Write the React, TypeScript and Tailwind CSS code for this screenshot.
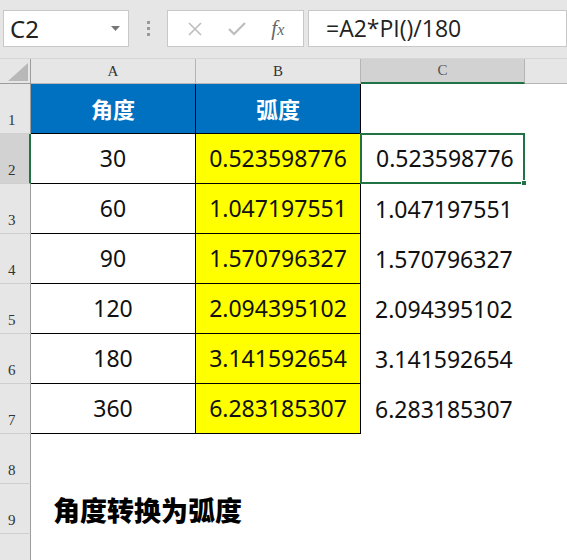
const rows = [
  { a: '30', b: '0.523598776' },
  { a: '60', b: '1.047197551' },
  { a: '90', b: '1.570796327' },
  { a: '120', b: '2.094395102' },
  { a: '180', b: '3.141592654' },
  { a: '360', b: '6.283185307' },
];

const num = "font-['Noto_Sans','Open_Sans',sans-serif] text-[23px] text-[#111]";
const cjk = "font-['Noto_Sans_CJK_SC','Noto_Sans',sans-serif]";
const hdr = "font-['Liberation_Serif',serif] text-[15px] text-[#333]";

function RowHead({ n, active = false }: { n?: number; active?: boolean }) {
  return (
    <div
      className={`h-[50px] flex items-end pl-[8px] pb-[2px] border-b border-[#cfcfcf] ${hdr} ${
        active ? 'bg-[#d2d2d2] border-r-2 border-r-[#217346]' : 'bg-[#e6e6e6] border-r border-r-[#9c9c9c]'
      }`}
    >
      {n}
    </div>
  );
}

export default function App() {
  return (
    <div className="w-[567px] h-[560px] overflow-hidden bg-white">
      {/* formula bar */}
      <div className="h-[59px] bg-[#e6e6e6] flex items-start pt-[10px] pl-[3px] border-b border-[#d6d6d6]">
        <div className="w-[126px] h-[37px] bg-white border border-[#c8c8c8] flex items-center justify-between pl-[6px] pr-[8px]">
          <span className="font-['Noto_Sans',sans-serif] text-[24px] text-[#222]">C2</span>
          <svg width="9" height="5" viewBox="0 0 9 5">
            <path d="M0 0h9L4.5 5z" fill="#777" />
          </svg>
        </div>
        <div className="w-[38px] h-[37px] flex flex-col items-center justify-center gap-[3px]">
          <span className="w-[3px] h-[3px] bg-[#999]" />
          <span className="w-[3px] h-[3px] bg-[#999]" />
          <span className="w-[3px] h-[3px] bg-[#999]" />
        </div>
        <div className="w-[137px] h-[37px] bg-white border border-[#c8c8c8] flex items-center justify-around px-[6px]">
          <svg width="16" height="16" viewBox="0 0 16 16">
            <path d="M2 2l12 12M14 2L2 14" stroke="#bdbdbd" strokeWidth="1.6" />
          </svg>
          <svg width="18" height="14" viewBox="0 0 18 14">
            <path d="M1 7l5 5L17 1" stroke="#bdbdbd" strokeWidth="2.2" fill="none" />
          </svg>
          <span className="font-['Liberation_Serif',serif] italic text-[21px] text-[#666] leading-none">
            f<span className="text-[16px]">x</span>
          </span>
        </div>
        <div className="ml-[4px] flex-1 h-[37px] bg-white border border-[#c8c8c8] flex items-center pl-[17px]">
          <span className="font-['Open_Sans','Noto_Sans',sans-serif] text-[23px] text-[#222]">=A2*PI()/180</span>
        </div>
      </div>

      {/* grid */}
      <div className="grid grid-cols-[31px_165px_165px_164px_1fr]">
        {/* column header row */}
        <div className="h-[25px] bg-[#e6e6e6] border-r border-b border-[#9c9c9c] flex items-end justify-end pr-[2px] pb-[2px]">
          <svg width="20" height="18" viewBox="0 0 20 18">
            <path d="M20 0v18H0z" fill="#b8b8b8" />
          </svg>
        </div>
        <div className={`h-[25px] bg-[#e6e6e6] border-r border-b border-[#b5b5b5] flex items-center justify-center ${hdr}`}>A</div>
        <div className={`h-[25px] bg-[#e6e6e6] border-r border-b border-[#b5b5b5] flex items-center justify-center ${hdr}`}>B</div>
        <div className={`h-[25px] bg-[#d2d2d2] border-r border-[#b5b5b5] border-b-2 border-b-[#217346] flex items-center justify-center ${hdr} text-[#555]`}>C</div>
        <div className="h-[25px] bg-[#e6e6e6] border-b border-[#b5b5b5]" />

        {/* row 1 */}
        <RowHead n={1} />
        <div className={`h-[50px] bg-[#0070c0] border-r border-b border-black flex items-center justify-center text-white font-bold text-[22px] ${cjk}`}>角度</div>
        <div className={`h-[50px] bg-[#0070c0] border-r border-b border-black flex items-center justify-center text-white font-bold text-[22px] ${cjk}`}>弧度</div>
        <div className="h-[50px]" />
        <div className="h-[50px]" />

        {rows.map((r, i) => (
          <div key={r.a} className="contents">
            <RowHead n={i + 2} active={i === 0} />
            <div className={`h-[50px] bg-white border-r border-b border-black flex items-center justify-center ${num}`}>{r.a}</div>
            <div className={`h-[50px] bg-[#ffff00] border-r border-b border-black flex items-center justify-center ${num}`}>{r.b}</div>
            <div
              className={`relative h-[50px] flex items-center pl-[14px] ${num} ${
                i === 0 ? 'border-2 border-[#217346] ml-[-1px] mt-[-1px] h-[51px]' : ''
              }`}
            >
              {r.b}
              {i === 0 && <span className="absolute right-[-4px] bottom-[-4px] w-[6px] h-[6px] bg-[#217346] border border-white" />}
            </div>
            <div className="h-[50px]" />
          </div>
        ))}

        {/* row 8 */}
        <RowHead n={8} />
        <div className="h-[50px] col-span-4" />

        {/* row 9 */}
        <RowHead n={9} />
        <div className={`h-[50px] col-span-4 flex items-center pl-[22px] pt-[2px] text-[27px] font-black text-black ${cjk}`}>
          角度转换为弧度
        </div>

        {/* row 10 (label falls below the window) */}
        <RowHead />
        <div className="h-[50px] col-span-4" />
      </div>
    </div>
  );
}
